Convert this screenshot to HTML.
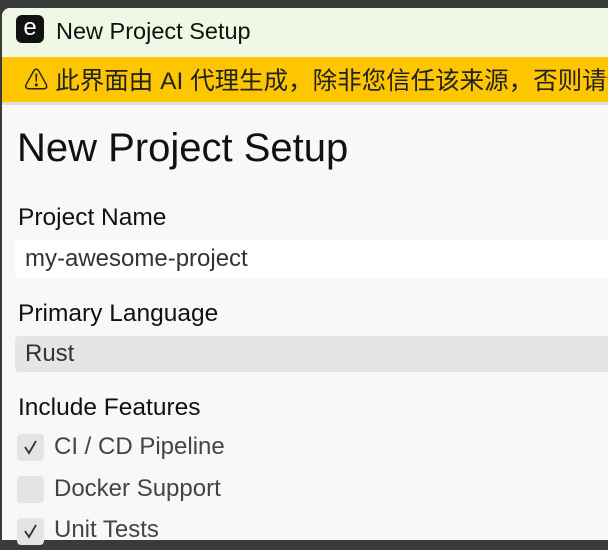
<!DOCTYPE html>
<html><head><meta charset="utf-8"><style>
*{margin:0;padding:0;box-sizing:border-box}
body{width:608px;height:540px;overflow:hidden;background:#3a3a3a;font-family:"Liberation Sans","Noto Sans CJK SC",sans-serif;position:relative}
.win{position:absolute;left:2px;top:8px;right:0;bottom:0;background:#f8f8f8;border-top-left-radius:8px;overflow:hidden}
.title{height:49px;background:#eff8e4;position:relative}
.logo{position:absolute;left:14px;top:7px;width:28px;height:28px;background:#111;border-radius:6px;color:#fff;font-size:24px;line-height:26px;text-align:center}
.title span{position:absolute;left:54px;top:10px;font-size:23.5px;color:#111}
.warn{height:48px;background:#fdc600;font-size:24.5px;color:#222;padding-left:22px;line-height:50px;white-space:nowrap;border-bottom:3px solid #ddd}
h1{position:absolute;left:17px;top:124px;font-size:40px;font-weight:normal;color:#111;line-height:48px}
.lbl{position:absolute;left:18px;font-size:24.5px;color:#111;line-height:28px}
.box{position:absolute;left:15px;right:0;font-size:24px;color:#333;padding-left:10px;border-radius:4px 0 0 4px}
.cb{position:absolute;left:17px;width:27px;height:27px;background:#e4e4e4;border-radius:4px}
.cbt{position:absolute;left:54px;font-size:24px;color:#444;line-height:28px}
</style></head><body>
<div class="win">
<div class="title"><div class="logo">e</div><span>New Project Setup</span></div>
<div class="warn">⚠ 此界面由 AI 代理生成，除非您信任该来源，否则请谨慎操作</div>
</div>
<h1>New Project Setup</h1>
<div class="lbl" style="top:204px">Project Name</div>
<div class="box" style="top:240px;height:38px;background:#fff;line-height:38px">my-awesome-project</div>
<div class="lbl" style="top:300px">Primary Language</div>
<div class="box" style="top:336px;height:36px;background:#e5e5e5;line-height:36px">Rust</div>
<div class="lbl" style="top:394px">Include Features</div>
<div class="cb" style="top:434px"><svg width="27" height="27"><path d="M8 13l4 6 7-12" stroke="#333" stroke-width="1.8" fill="none"/></svg></div>
<div class="cbt" style="top:433px">CI / CD Pipeline</div>
<div class="cb" style="top:476px"></div>
<div class="cbt" style="top:475px">Docker Support</div>
<div class="cb" style="top:518px"><svg width="27" height="27"><path d="M8 13l4 6 7-12" stroke="#333" stroke-width="1.8" fill="none"/></svg></div>
<div class="cbt" style="top:516px">Unit Tests</div>
</body></html>
